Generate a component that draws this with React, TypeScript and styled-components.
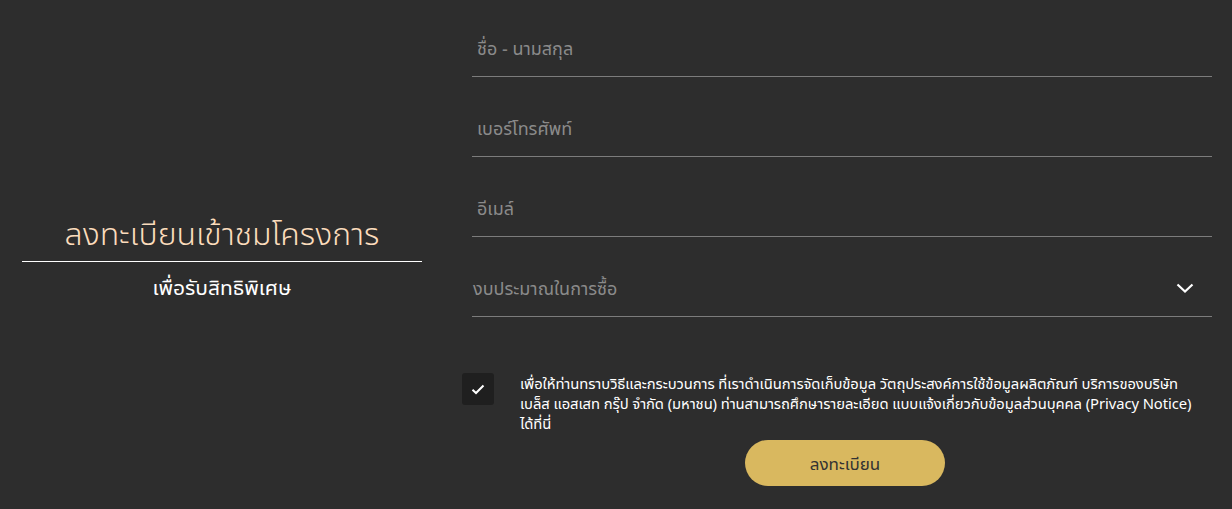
import React from "react";
import styled, { createGlobalStyle } from "styled-components";

const Global = createGlobalStyle`
  html, body { margin: 0; padding: 0; background: #2d2d2d; }
  body { font-family: "Noto Sans Thai UI", "Noto Sans Thai", "Noto Sans", "Liberation Sans", sans-serif; }
`;

const Page = styled.div`
  display: flex;
  width: 1232px;
  height: 509px;
  box-sizing: border-box;
  padding: 0 20px 0 22px;
  gap: 50px;
  background: #2d2d2d;
  overflow: hidden;
`;

const Intro = styled.div`
  width: 400px;
  flex: none;
  align-self: center;
  display: flex;
  flex-direction: column;
  align-items: stretch;
  margin-top: 4px;
`;

const Title = styled.h1`
  margin: 0;
  padding-bottom: 7px;
  border-bottom: 1px solid #ffffff;
  color: #fbdcbc;
  font-weight: 300;
  font-size: 32px;
  line-height: 42px;
  text-align: center;
`;

const Subtitle = styled.p`
  margin: 11px 0 0;
  color: #ffffff;
  font-weight: 400;
  font-size: 21px;
  line-height: 28px;
  text-align: center;
`;

const Form = styled.form`
  flex: 1;
  display: flex;
  flex-direction: column;
  margin-top: -3px;
`;

const Field = styled.label`
  height: 80px;
  box-sizing: border-box;
  display: flex;
  align-items: flex-end;
  justify-content: space-between;
  padding: 0 18px 15px ${(p: { $inset?: number }) => p.$inset ?? 5}px;
  border-bottom: 1px solid #7c7c7c;
`;

const Placeholder = styled.span`
  color: #8a8a8a;
  font-size: 18px;
  line-height: 26px;
`;

const Chevron = styled.svg`
  width: 18px;
  height: 10px;
  margin-bottom: 8px;
`;

const Consent = styled.div`
  display: flex;
  gap: 26px;
  margin: 56px 0 0 -10px;
`;

const Check = styled.span`
  flex: none;
  width: 32px;
  height: 32px;
  border-radius: 3px;
  background: #1f1f1f;
  display: flex;
  align-items: center;
  justify-content: center;
`;

const ConsentText = styled.p`
  margin: 0;
  color: #ffffff;
  font-weight: 400;
  font-size: 14.8px;
  letter-spacing: -0.08px;
  line-height: 20px;
  max-width: 696px;
`;

const Submit = styled.button`
  align-self: center;
  margin: 7px 0 0 6px;
  width: 200px;
  height: 46px;
  border: none;
  border-radius: 23px;
  background: #d9b85f;
  color: #333333;
  font-family: inherit;
  font-size: 17px;
`;

export default function App() {
  return (
    <>
      <Global />
      <Page>
        <Intro>
          <Title>ลงทะเบียนเข้าชมโครงการ</Title>
          <Subtitle>เพื่อรับสิทธิพิเศษ</Subtitle>
        </Intro>
        <Form>
          <Field>
            <Placeholder>ชื่อ - นามสกุล</Placeholder>
          </Field>
          <Field>
            <Placeholder>เบอร์โทรศัพท์</Placeholder>
          </Field>
          <Field>
            <Placeholder>อีเมล์</Placeholder>
          </Field>
          <Field $inset={1}>
            <Placeholder>งบประมาณในการซื้อ</Placeholder>
            <Chevron viewBox="0 0 18 10" fill="none">
              <path d="M1.5 1.5 L9 8.5 L16.5 1.5" stroke="#ffffff" strokeWidth="2.2" />
            </Chevron>
          </Field>
          <Consent>
            <Check>
              <svg width="14" height="11" viewBox="0 0 14 11" fill="none">
                <path d="M1.5 5.8 L5 9 L12.5 1.5" stroke="#ffffff" strokeWidth="2" />
              </svg>
            </Check>
            <ConsentText>
              เพื่อให้ท่านทราบวิธีและกระบวนการ ที่เราดำเนินการจัดเก็บข้อมูล วัตถุประสงค์การใช้ข้อมูลผลิตภัณฑ์ บริการของบริษัท
              <br />
              เบล็ส แอสเสท กรุ๊ป จำกัด (มหาชน) ท่านสามารถศึกษารายละเอียด แบบแจ้งเกี่ยวกับข้อมูลส่วนบุคคล (Privacy Notice)
              <br />
              ได้ที่นี่
            </ConsentText>
          </Consent>
          <Submit type="button">ลงทะเบียน</Submit>
        </Form>
      </Page>
    </>
  );
}
